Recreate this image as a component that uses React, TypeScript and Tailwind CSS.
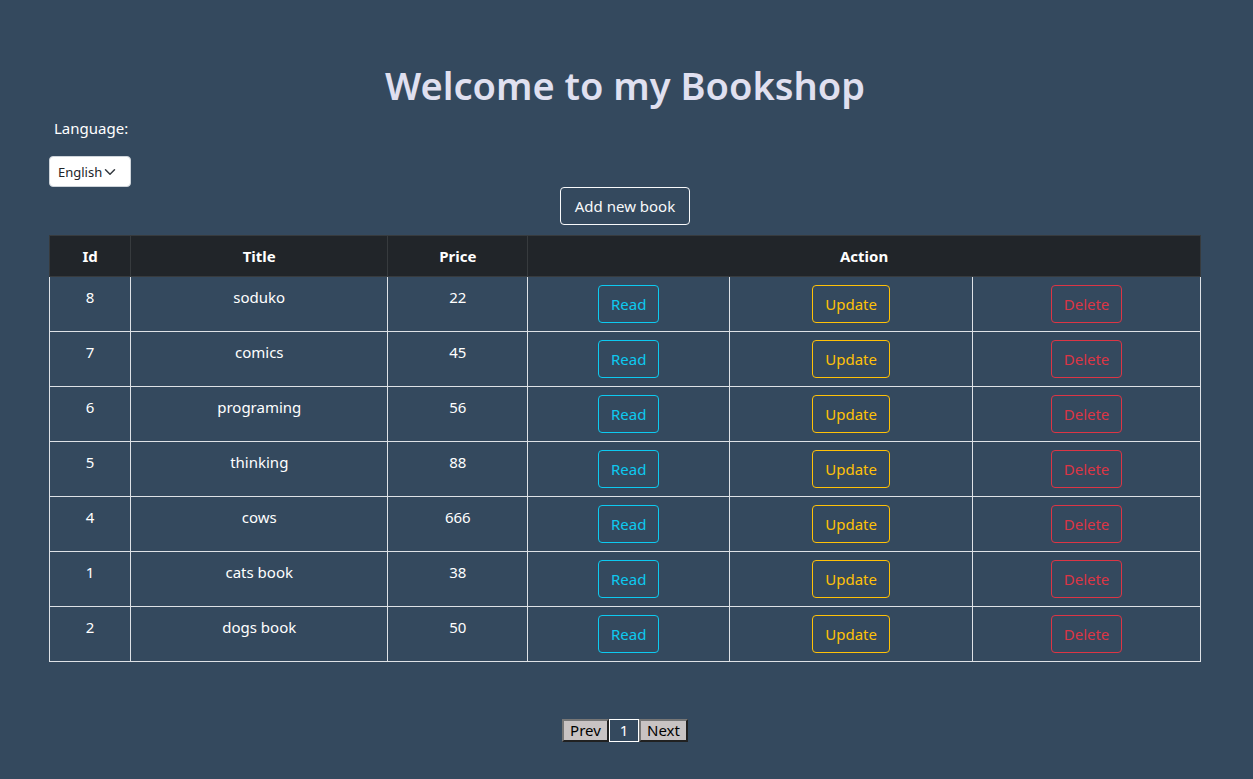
import { useState } from "react";

type Book = { id: number; title: string; price: number };

const books: Book[] = [
  { id: 8, title: "soduko", price: 22 },
  { id: 7, title: "comics", price: 45 },
  { id: 6, title: "programing", price: 56 },
  { id: 5, title: "thinking", price: 88 },
  { id: 4, title: "cows", price: 666 },
  { id: 1, title: "cats book", price: 38 },
  { id: 2, title: "dogs book", price: 50 },
];

const button = "h-[38px] rounded-[4px] border align-top text-[15px] leading-6";
const cell = "border border-[#dee2e6] px-2 pt-2 pb-2 align-top";
const head = "border border-[#373b3e] p-2 font-bold";
const pager =
  "h-[23px] border-2 border-t-[#767676] border-l-[#767676] border-r-[#212121] border-b-[#212121] bg-[#c8c3c3] text-[15px] leading-[19px] text-black";

function LanguagePicker() {
  const [language, setLanguage] = useState("English");
  return (
    <div className="flex flex-col items-start">
      <label htmlFor="language" className="mb-4 px-[5px]">
        Language:
      </label>
      <div className="relative">
        <select
          id="language"
          value={language}
          onChange={(e) => setLanguage(e.target.value)}
          className="block h-[31px] w-[82px] appearance-none rounded-[4px] border border-[#ced4da] bg-white pl-2 text-[13px] text-[#212529]"
        >
          <option>English</option>
          <option>Arabic</option>
        </select>
        <svg
          viewBox="0 0 16 16"
          aria-hidden="true"
          className="pointer-events-none absolute top-[10px] left-[55px] size-3"
        >
          <path
            d="M2 5l6 6 6-6"
            fill="none"
            stroke="#343a40"
            strokeWidth="2"
            strokeLinecap="round"
            strokeLinejoin="round"
          />
        </svg>
      </div>
    </div>
  );
}

function BookRow({ book }: { book: Book }) {
  return (
    <tr className="h-[55px]">
      <td className={cell}>{book.id}</td>
      <td className={cell}>{book.title}</td>
      <td className={cell}>{book.price}</td>
      <td className={cell}>
        <button className={`${button} w-[61px] border-[#0dcaf0] text-[#0dcaf0]`}>Read</button>
      </td>
      <td className={cell}>
        <button className={`${button} w-[78px] border-[#ffc107] text-[#ffc107]`}>Update</button>
      </td>
      <td className={cell}>
        <button className={`${button} w-[71px] border-[#dc3545] text-[#dc3545]`}>Delete</button>
      </td>
    </tr>
  );
}

export default function App() {
  return (
    <div className="min-h-screen bg-[#34495e] pt-[61px] pr-[52px] pb-9 pl-[49px] font-['Noto_Sans','Open_Sans',sans-serif] text-[15px] leading-6 text-white">
      <h1 className="mb-[7px] text-center text-[38px] leading-[48px] font-semibold text-[#e0e0f0]">
        Welcome to my Bookshop
      </h1>
      <LanguagePicker />
      <div className="mb-[10px] flex justify-center">
        <button className={`${button} w-[130px] border-[#f8f9fa] text-[#f8f9fa]`}>
          Add new book
        </button>
      </div>
      <table className="w-full table-fixed border-collapse text-center">
        <colgroup>
          <col className="w-[7.05%]" />
          <col className="w-[22.35%]" />
          <col className="w-[12.15%]" />
          <col className="w-[17.55%]" />
          <col className="w-[21.1%]" />
          <col />
        </colgroup>
        <thead className="bg-[#212529]">
          <tr>
            <th className={head}>Id</th>
            <th className={head}>Title</th>
            <th className={head}>Price</th>
            <th className={head} colSpan={3}>
              Action
            </th>
          </tr>
        </thead>
        <tbody>
          {books.map((book) => (
            <BookRow key={book.id} book={book} />
          ))}
        </tbody>
      </table>
      <nav aria-label="Pages" className="mt-[57px] flex justify-center">
        <button className={`${pager} w-[47px]`}>Prev</button>
        <button className="h-[23px] w-[30px] border border-white text-[15px] leading-[21px]">
          1
        </button>
        <button className={`${pager} w-[49px]`}>Next</button>
      </nav>
    </div>
  );
}
